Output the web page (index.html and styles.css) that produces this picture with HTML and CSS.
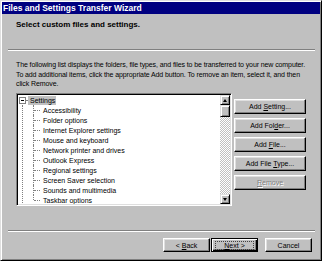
FILE: index.html
```html
<!DOCTYPE html>
<html>
<head>
<meta charset="utf-8">
<link rel="stylesheet" href="styles.css">
</head>
<body>
<div class="window">
  <div class="titlebar">Files and Settings Transfer Wizard</div>
  <div class="header"><h1 class="heading">Select custom files and settings.</h1></div>
  <div class="sep"></div>
  <div class="content">
    <p class="intro">The following list displays the folders, file types, and files to be transferred to your new computer.<br>To add additional items, click the appropriate Add button. To remove an item, select it, and then<br>click Remove.</p>
    <div class="listrow">
      <div class="listbox">
        <div class="tree">
          <div class="row root"><span class="exp"></span><span class="stub"></span><span class="label">Settings</span></div>
          <div class="children">
            <div class="child"><span class="branch"></span><span class="text">Accessibility</span></div>
            <div class="child"><span class="branch"></span><span class="text">Folder options</span></div>
            <div class="child"><span class="branch"></span><span class="text">Internet Explorer settings</span></div>
            <div class="child"><span class="branch"></span><span class="text">Mouse and keyboard</span></div>
            <div class="child"><span class="branch"></span><span class="text">Network printer and drives</span></div>
            <div class="child"><span class="branch"></span><span class="text">Outlook Express</span></div>
            <div class="child"><span class="branch"></span><span class="text">Regional settings</span></div>
            <div class="child"><span class="branch"></span><span class="text">Screen Saver selection</span></div>
            <div class="child"><span class="branch"></span><span class="text">Sounds and multimedia</span></div>
            <div class="child"><span class="branch last"></span><span class="text">Taskbar options</span></div>
          </div>
        </div>
        <div class="vscroll">
          <div class="sbtn"><span class="tri up"></span></div>
          <div class="thumb"></div>
          <div class="track"></div>
          <div class="sbtn"><span class="tri down"></span></div>
        </div>
      </div>
      <div class="sidebtns">
        <div class="btn"><span>Add <u>S</u>etting...</span></div>
        <div class="btn"><span>Add Fol<u>d</u>er...</span></div>
        <div class="btn"><span>Add <u>F</u>ile...</span></div>
        <div class="btn"><span>Add File <u>T</u>ype...</span></div>
        <div class="btn disabled"><span><u>R</u>emove</span></div>
      </div>
    </div>
  </div>
  <div class="sep bottom"></div>
  <div class="footer">
    <div class="btn wide"><span>&lt; <u>B</u>ack</span></div>
    <div class="btn wide default"><span class="focus"><span><u>N</u>ext &gt;</span></span></div>
    <div class="btn wide cancel"><span>Cancel</span></div>
  </div>
</div>
</body>
</html>
```
FILE: styles.css
```css
html, body {
  margin: 0;
  padding: 0;
  background: #c0c0c0;
}

.window {
  width: 322px;
  height: 261px;
  box-sizing: border-box;
  padding: 1px;
  border: 1px solid;
  border-color: #dfdfdf #000 #000 #dfdfdf;
  box-shadow: inset 1px 1px #fff, inset -1px -1px #808080;
  background: #c0c0c0;
  display: flex;
  flex-direction: column;
  font-family: "Liberation Sans Narrow", "Liberation Sans", Arial, sans-serif;
  font-size: 7px;
  color: #000;
  overflow: hidden;
}

.titlebar {
  height: 12px;
  line-height: 12px;
  background: #000080;
  color: #fff;
  font-weight: bold;
  font-size: 8.5px;
  padding-left: 1px;
  white-space: nowrap;
}

.header {
  height: 35px;
  box-sizing: border-box;
  padding: 6px 0 0 14px;
}

.heading {
  margin: 0;
  font-size: 8px;
  font-weight: bold;
  line-height: 10px;
}

.sep {
  height: 0;
  margin: 0 5px 0 6px;
  border-top: 1px solid #808080;
  border-bottom: 1px solid #fff;
}

.sep.bottom {
  margin-top: 24px;
}

.content {
  padding-left: 14px;
}

.intro {
  margin: 9px 0 0 0;
  line-height: 9.5px;
  letter-spacing: -0.1px;
  white-space: nowrap;
}

.listrow {
  display: flex;
  margin-top: 4.5px;
}

.listbox {
  width: 216px;
  height: 113px;
  box-sizing: border-box;
  border: 1px solid;
  border-color: #808080 #fff #fff #808080;
  box-shadow: inset 1px 1px #000, inset -1px -1px #dfdfdf;
  padding: 1px;
  background: #fff;
  display: flex;
}

.tree {
  flex: 1;
  overflow: hidden;
  white-space: nowrap;
}

.row {
  height: 10px;
  display: flex;
  align-items: center;
}

.exp {
  width: 7px;
  height: 7px;
  box-sizing: border-box;
  border: 1px solid #808080;
  margin-left: 1px;
  position: relative;
  background: #fff;
}

.exp::after {
  content: "";
  position: absolute;
  left: 1px;
  top: 2px;
  width: 3px;
  height: 1px;
  background: #000;
}

.stub {
  width: 2px;
  border-top: 1px dotted #808080;
}

.label {
  background: #c0c0c0;
  padding: 0 1px 0 2px;
  line-height: 9px;
  height: 9px;
}

.children {
  margin-left: 4px;
  border-left: 1px dotted #808080;
}

.child {
  height: 10px;
  display: flex;
  align-items: center;
}

.branch {
  width: 7px;
  margin-left: 10px;
  align-self: stretch;
  position: relative;
}

.branch::before {
  content: "";
  position: absolute;
  left: 0;
  top: 0;
  bottom: 0;
  border-left: 1px dotted #808080;
}

.branch.last::before {
  bottom: 5px;
}

.branch::after {
  content: "";
  position: absolute;
  left: 1px;
  top: 5px;
  width: 6px;
  border-top: 1px dotted #808080;
}

.text {
  margin-left: 3px;
  line-height: 9px;
}

.vscroll {
  width: 10px;
  display: flex;
  flex-direction: column;
  background-color: #c0c0c0;
  background-image: repeating-conic-gradient(#fff 0 25%, #c0c0c0 0 50%);
  background-size: 2px 2px;
}

.sbtn, .thumb {
  box-sizing: border-box;
  background: #c0c0c0;
  border: 1px solid;
  border-color: #dfdfdf #000 #000 #dfdfdf;
  box-shadow: inset 1px 1px #fff, inset -1px -1px #808080;
}

.sbtn {
  height: 10px;
  display: flex;
  align-items: center;
  justify-content: center;
}

.thumb {
  height: 12px;
}

.track {
  flex: 1;
}

.tri {
  width: 0;
  height: 0;
  border-left: 2.5px solid transparent;
  border-right: 2.5px solid transparent;
}

.tri.up {
  border-bottom: 3px solid #000;
}

.tri.down {
  border-top: 3px solid #000;
}

.sidebtns {
  margin-left: 2px;
  padding-top: 6px;
  display: flex;
  flex-direction: column;
  gap: 4px;
}

.btn {
  width: 72px;
  height: 15px;
  box-sizing: border-box;
  background: #c0c0c0;
  border: 1px solid;
  border-color: #fff #000 #000 #fff;
  box-shadow: inset -1px -1px #808080, inset 1px 1px #dfdfdf;
  display: flex;
  align-items: center;
  justify-content: center;
  white-space: nowrap;
}

.btn.disabled {
  color: #808080;
  text-shadow: 1px 1px #fff;
}

.footer {
  display: flex;
  padding: 6px 0 0 161px;
}

.btn.wide {
  width: 47px;
  height: 14px;
}

.btn.default {
  margin-left: 1px;
  border: 1px solid #000;
  box-shadow: inset 1px 1px #fff, inset -1px -1px #000, inset -2px -2px #808080;
}

.focus {
  width: 39px;
  height: 9px;
  box-sizing: border-box;
  border: 1px dotted #404040;
  display: flex;
  align-items: center;
  justify-content: center;
  line-height: 7px;
}

.btn.cancel {
  margin-left: 7px;
}
```
